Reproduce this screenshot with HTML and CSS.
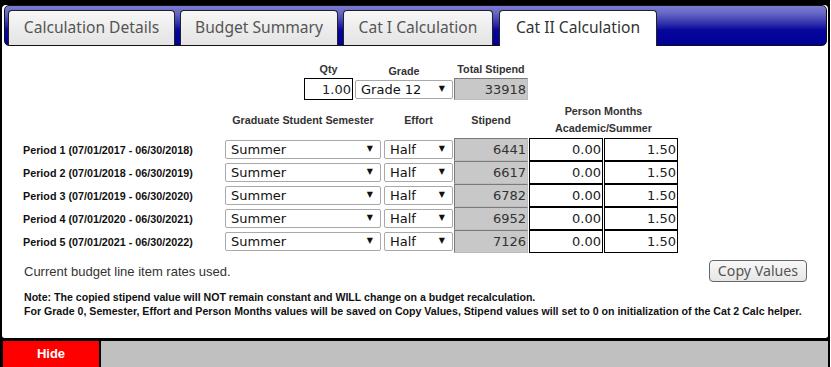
FILE: index.html
```html
<!DOCTYPE html>
<html>
<head>
<meta charset="utf-8">
<title>Cat II Calculation</title>
<link rel="stylesheet" href="styles.css">
</head>
<body>
<div class="frame">
  <div class="panel">
    <div class="tabbar">
      <div class="tab t1">Calculation Details</div>
      <div class="tab t2">Budget Summary</div>
      <div class="tab t3">Cat I Calculation</div>
      <div class="tab t4 active">Cat II Calculation</div>
    </div>
    <div class="content">
      <div class="grid top">
        <div class="topleft">
          <div class="group">
            <div class="lbl">Qty</div>
            <input class="num qty" type="text" value="1.00">
          </div>
          <div class="group">
            <div class="lbl">Grade</div>
            <div class="sel grade"><select><option>Grade 12</option></select></div>
          </div>
        </div>
        <div class="group">
          <div class="lbl">Total Stipend</div>
          <input class="num ro total" type="text" value="33918" readonly>
        </div>
      </div>

      <div class="grid head">
        <div class="hcell c2">Graduate Student Semester</div>
        <div class="hcell c3">Effort</div>
        <div class="hcell c4">Stipend</div>
        <div class="hcell c56">Person Months<br>Academic/Summer</div>
      </div>

      <div class="grid rows">
        <div class="plabel">Period 1 (07/01/2017 - 06/30/2018)</div>
        <div class="sel sem"><select><option>Summer</option></select></div>
        <div class="sel eff"><select><option>Half</option></select></div>
        <input class="num ro cell" type="text" value="6441" readonly>
        <input class="num cell" type="text" value="0.00">
        <input class="num cell" type="text" value="1.50">

        <div class="plabel">Period 2 (07/01/2018 - 06/30/2019)</div>
        <div class="sel sem"><select><option>Summer</option></select></div>
        <div class="sel eff"><select><option>Half</option></select></div>
        <input class="num ro cell" type="text" value="6617" readonly>
        <input class="num cell" type="text" value="0.00">
        <input class="num cell" type="text" value="1.50">

        <div class="plabel">Period 3 (07/01/2019 - 06/30/2020)</div>
        <div class="sel sem"><select><option>Summer</option></select></div>
        <div class="sel eff"><select><option>Half</option></select></div>
        <input class="num ro cell" type="text" value="6782" readonly>
        <input class="num cell" type="text" value="0.00">
        <input class="num cell" type="text" value="1.50">

        <div class="plabel">Period 4 (07/01/2020 - 06/30/2021)</div>
        <div class="sel sem"><select><option>Summer</option></select></div>
        <div class="sel eff"><select><option>Half</option></select></div>
        <input class="num ro cell" type="text" value="6952" readonly>
        <input class="num cell" type="text" value="0.00">
        <input class="num cell" type="text" value="1.50">

        <div class="plabel">Period 5 (07/01/2021 - 06/30/2022)</div>
        <div class="sel sem"><select><option>Summer</option></select></div>
        <div class="sel eff"><select><option>Half</option></select></div>
        <input class="num ro cell" type="text" value="7126" readonly>
        <input class="num cell" type="text" value="0.00">
        <input class="num cell" type="text" value="1.50">
      </div>

      <div class="copyrow">
        <div class="rates">Current budget line item rates used.</div>
        <button class="copy" type="button">Copy Values</button>
      </div>

      <div class="note">
        <div>Note: The copied stipend value will NOT remain constant and WILL change on a budget recalculation.</div>
        <div>For Grade 0, Semester, Effort and Person Months values will be saved on Copy Values, Stipend values will set to 0 on initialization of the Cat 2 Calc helper.</div>
      </div>
    </div>
  </div>
  <div class="footer">
    <div class="hide">Hide</div>
    <div class="fill"></div>
  </div>
</div>
</body>
</html>
```

FILE: styles.css
```css
* { box-sizing: border-box; }

html, body {
  margin: 0;
  padding: 0;
  background: #fff;
}

.frame {
  width: 830px;
  border: 2px solid #000;
  background: #000;
}

.panel {
  background: #fff;
  height: 335px;
  border-bottom: 2px solid #000;
  border-radius: 4px;
}

.tabbar {
  margin: 3px 1px 0 2px;
  height: 41px;
  border: 1px solid #111;
  border-radius: 5px;
  padding: 0 0 0 3px;
  display: flex;
  align-items: flex-end;
  gap: 5px;
  background: linear-gradient(to bottom, #7c7cd4 0%, #6868c6 18%, #3030ac 45%, #06069c 62%, #000099 100%);
}

.tab {
  height: 35px;
  border: 1px solid #222;
  border-bottom: none;
  border-radius: 4px 4px 0 0;
  font-family: "Noto Sans", sans-serif;
  font-size: 15.6px;
  line-height: 33px;
  color: #555;
  text-align: center;
  white-space: nowrap;
  background: linear-gradient(to bottom, #f7f7f7 0%, #ececec 55%, #e4e4e4 100%);
}

.t1 { width: 167px; }
.t2 { width: 158px; }
.t3 { width: 150px; }
.t4 { width: 158px; margin-left: 1px; }

.tab.active {
  height: 36px;
  margin-bottom: -1px;
  background: #fff;
  color: #333;
}

.content {
  padding: 0 21px;
  font-family: "Liberation Sans", Arial, sans-serif;
}

.grid {
  display: grid;
  grid-template-columns: 202px 159px 70px 75px 75px 74px;
}

.top {
  margin-top: 16px;
}

.topleft {
  grid-column: 2 / 4;
  display: flex;
  justify-content: flex-end;
  align-items: flex-end;
  gap: 2px;
  padding-right: 1px;
}

.group {
  display: flex;
  flex-direction: column;
  align-items: center;
}

.top > .group {
  align-items: flex-start;
}

.top > .group .lbl {
  width: 74px;
}

.lbl {
  font-size: 10.75px;
  font-weight: bold;
  line-height: 14px;
  color: #333;
  text-align: center;
  margin-bottom: 2px;
  white-space: nowrap;
}

.num {
  display: block;
  height: 22px;
  border: 1px solid #000;
  font-family: "DejaVu Sans", Verdana, sans-serif;
  font-size: 13px;
  color: #222;
  text-align: right;
  padding: 0 1px 0 2px;
  margin: 0;
  background: #fff;
  outline: none;
}

.qty { width: 49px; }
.total { width: 74px; }

.ro {
  background: #c8c8c8;
  border-color: #7a7a7a #bcbcbc #bcbcbc #7a7a7a;
  color: #333;
}

.sel {
  position: relative;
}

.sel select {
  appearance: none;
  -webkit-appearance: none;
  display: block;
  width: 100%;
  height: 19px;
  border: 1px solid #a9a9a9;
  border-radius: 2px;
  background: #fff;
  font-family: "DejaVu Sans", Verdana, sans-serif;
  font-size: 13px;
  color: #111;
  padding: 0 0 0 5px;
  margin: 0;
  outline: none;
}

.sel::after {
  content: "\25BC";
  position: absolute;
  right: 8px;
  top: 4px;
  font-family: "DejaVu Sans", sans-serif;
  font-size: 8px;
  line-height: 10px;
  color: #111;
  pointer-events: none;
}

.grade {
  width: 98px;
  margin-bottom: 1px;
}

.head {
  margin-top: 2px;
  height: 36px;
  align-items: center;
}

.hcell {
  font-size: 10.75px;
  font-weight: bold;
  line-height: 17px;
  color: #333;
  text-align: center;
  white-space: nowrap;
}

.c2 { grid-column: 2; width: 156px; }
.c3 { grid-column: 3; width: 69px; }
.c4 { grid-column: 4; width: 74px; }
.c56 { grid-column: 5 / 7; width: 149px; }

.rows {
  grid-auto-rows: 23px;
  align-items: center;
}

.plabel {
  font-size: 10.75px;
  font-weight: bold;
  color: #111;
  white-space: nowrap;
}

.sem { width: 156px; }
.eff { width: 69px; }

.cell {
  width: 74px;
  height: 23px;
}

.copyrow {
  margin-top: 7px;
  height: 22px;
  display: flex;
  justify-content: space-between;
  align-items: center;
}

.rates {
  font-size: 13px;
  color: #333;
  padding-left: 1px;
}

.copy {
  width: 98px;
  height: 22px;
  border: 1px solid #666;
  border-radius: 4px;
  background: linear-gradient(to bottom, #f8f8f8 0%, #e6e6e6 100%);
  font-family: "Noto Sans", sans-serif;
  font-size: 14.2px;
  color: #555;
  padding: 0;
  line-height: 20px;
}

.note {
  margin-top: 8px;
  font-size: 10.6px;
  font-weight: bold;
  line-height: 14px;
  color: #111;
  padding-left: 1px;
  white-space: nowrap;
}

.footer {
  display: flex;
  height: 28px;
  padding: 1px 0 1px 1px;
  gap: 2px;
  background: #000;
}

.hide {
  width: 96px;
  background: #ff0000;
  color: #fff;
  font-family: "Liberation Sans", Arial, sans-serif;
  font-weight: bold;
  font-size: 13px;
  line-height: 26px;
  text-align: center;
}

.fill {
  flex: 1;
  background: #c0c0c0;
}
```
